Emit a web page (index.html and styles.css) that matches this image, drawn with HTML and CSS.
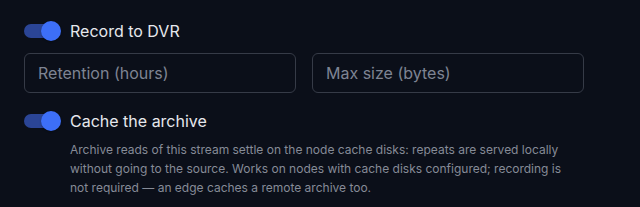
FILE: index.html
```html
<!DOCTYPE html>
<html lang="en">
<head>
<meta charset="utf-8">
<link rel="stylesheet" href="styles.css">
</head>
<body>
<div class="panel">
  <label class="toggle-row">
    <span class="switch"><span class="track"></span><span class="thumb"></span></span>
    <span class="label">Record to DVR</span>
  </label>
  <div class="fields">
    <input class="field" type="text" placeholder="Retention (hours)">
    <input class="field" type="text" placeholder="Max size (bytes)">
  </div>
  <label class="toggle-row second">
    <span class="switch"><span class="track"></span><span class="thumb"></span></span>
    <span class="label">Cache the archive</span>
  </label>
  <p class="help">Archive reads of this stream settle on the node cache disks: repeats are served locally without going to the source. Works on nodes with cache disks configured; recording is not required — an edge caches a remote archive too.</p>
</div>
</body>
</html>
```
FILE: styles.css
```css
html, body {
  margin: 0;
  padding: 0;
  background: #0b0f19;
}
body {
  font-family: Inter, "Noto Sans", sans-serif;
  color: #e4e6eb;
}
.panel {
  padding: 12px 0 0 12px;
}
.toggle-row {
  display: flex;
  align-items: center;
  height: 38px;
}
.toggle-row.second {
  margin-top: 9px;
}
.switch {
  position: relative;
  width: 58px;
  height: 38px;
  flex: none;
}
.track {
  position: absolute;
  left: 12px;
  top: 12px;
  width: 34px;
  height: 14px;
  border-radius: 7px;
  background: #2b4596;
}
.thumb {
  position: absolute;
  left: 29px;
  top: 9px;
  width: 20px;
  height: 20px;
  border-radius: 50%;
  background: #3d6ff7;
  box-shadow: 0 1px 2px rgba(0,0,0,0.3);
}
.label {
  font-size: 16px;
  line-height: 24px;
  color: #e6e8ed;
}
.fields {
  display: grid;
  grid-template-columns: 272px 272px;
  column-gap: 16px;
  margin: 3px 0 0 12px;
}
.field {
  box-sizing: border-box;
  height: 40px;
  margin: 0;
  padding: 0 13px;
  border: 1px solid #363b47;
  border-radius: 6px;
  background: transparent;
  font-family: Inter, "Noto Sans", sans-serif;
  font-size: 16px;
  color: #e6e8ed;
  outline: none;
}
.field::placeholder {
  color: #7e8493;
  opacity: 1;
}
.help {
  margin: 0;
  padding: 0 0 0 58px;
  max-width: 502px;
  font-size: 12px;
  line-height: 19.2px;
  color: #868b97;
}
```
